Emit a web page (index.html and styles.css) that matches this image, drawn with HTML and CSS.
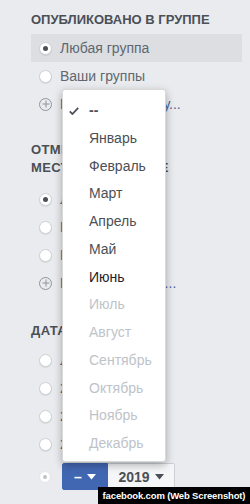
FILE: index.html
```html
<!DOCTYPE html>
<html lang="ru">

<head>
    <meta charset="UTF-8">
    <title>Фильтры</title>
    <link rel="stylesheet" href="styles.css">
</head>

<body>
    <section class="filters">
        <h3>Опубликовано в группе</h3>
        <div class="row aktiv"><span class="radio valgt"></span>Любая группа</div>
        <div class="row"><span class="radio"></span>Ваши группы</div>
        <div class="row"><span class="plus"></span><span class="link">Выберите группу...</span></div>

        <h3 class="second">Отмеченное местоположение</h3>
        <div class="row"><span class="radio valgt"></span>Любое место</div>
        <div class="row"><span class="radio"></span>Рядом</div>
        <div class="row"><span class="radio"></span>Москва</div>
        <div class="row"><span class="plus"></span><span class="link">Выберите город...</span></div>

        <h3 class="third">Дата публикации</h3>
        <div class="row"><span class="radio"></span>Любая дата</div>
        <div class="row"><span class="radio"></span>2019</div>
        <div class="row"><span class="radio"></span>2018</div>
        <div class="row"><span class="radio"></span>2017</div>
        <div class="vaelg">
            <span class="radio lille valgt"></span>
            <button class="knap blaa">–<svg width="9" height="6" viewBox="0 0 9 6"><path d="M0 0h9L4.5 5.5z" fill="#fff"/></svg></button>
            <button class="knap aar">2019<svg width="9" height="6" viewBox="0 0 9 6"><path d="M0 0h9L4.5 5.5z" fill="#4b4f56"/></svg></button>
        </div>
    </section>

    <ul class="menu">
        <li class="tom"><svg class="flueben" width="10" height="8" viewBox="0 0 10 8"><path d="M0.8 4.3l2.6 2.7L9.2 0.8" fill="none" stroke="#4b4f56" stroke-width="1.8"/></svg>--</li>
        <li>Январь</li>
        <li>Февраль</li>
        <li>Март</li>
        <li>Апрель</li>
        <li>Май</li>
        <li class="nu">Июнь</li>
        <li class="off">Июль</li>
        <li class="off">Август</li>
        <li class="off">Сентябрь</li>
        <li class="off">Октябрь</li>
        <li class="off">Ноябрь</li>
        <li class="off">Декабрь</li>
    </ul>

    <div class="kilde">facebook.com (Web Screenshot)</div>
</body>

</html>
```

FILE: styles.css
```css
* {
    margin: 0;
    padding: 0;
    box-sizing: border-box;
}

body {
    background-color: #e9ebee;
    font-family: "Liberation Sans", Arial, sans-serif;
    color: #606770;
    width: 250px;
    height: 504px;
    overflow: hidden;
    position: relative;
}

.filters {
    padding: 11px 8px 0 31px;
}

h3 {
    font-size: 13px;
    line-height: 18px;
    font-weight: bold;
    text-transform: uppercase;
    color: #4b4f56;
    margin-bottom: 5px;
}

h3.second {
    margin-top: 23px;
    margin-bottom: 8px;
    letter-spacing: 0.4px;
}

h3.third {
    margin-top: 25px;
    margin-bottom: 6px;
    letter-spacing: 0.4px;
}

.row {
    display: flex;
    align-items: center;
    height: 28px;
    padding-left: 8px;
    font-size: 14px;
    white-space: nowrap;
}

.aktiv {
    background-color: #dcdee2;
}

.link {
    color: #4b67a1;
}

.radio {
    flex: none;
    display: flex;
    align-items: center;
    justify-content: center;
    width: 13px;
    height: 13px;
    margin-right: 8px;
    border-radius: 50%;
    background-color: #fff;
    border: 1px solid #ccd0d5;
    box-shadow: 0 1px 1px rgba(0, 0, 0, 0.08);
}

.radio.valgt::after {
    content: "";
    width: 5px;
    height: 5px;
    border-radius: 50%;
    background-color: #4b4f56;
}

.plus {
    flex: none;
    position: relative;
    width: 13px;
    height: 13px;
    margin-right: 8px;
    border-radius: 50%;
    border: 1px solid #90949c;
}

.plus::before,
.plus::after {
    content: "";
    position: absolute;
    background-color: #90949c;
    left: 50%;
    top: 50%;
    transform: translate(-50%, -50%);
}

.plus::before {
    width: 7px;
    height: 1px;
}

.plus::after {
    width: 1px;
    height: 7px;
}

.vaelg {
    display: flex;
    align-items: center;
    height: 27px;
    margin-top: 5px;
    padding-left: 8px;
}

.radio.lille {
    width: 12px;
    height: 12px;
    margin-right: 11px;
    border-color: #e4e6e9;
    box-shadow: none;
}

.radio.lille::after {
    width: 4px;
    height: 4px;
    background-color: #bec3c9;
}

.knap {
    display: flex;
    align-items: center;
    justify-content: center;
    height: 27px;
    font-family: "Liberation Sans", Arial, sans-serif;
    font-size: 14px;
    font-weight: bold;
    border: 1px solid #ccd0d5;
}

.knap svg {
    margin-left: 5px;
}

.blaa {
    width: 46px;
    background-color: #4267b2;
    border-color: #4267b2;
    color: #fff;
    border-radius: 2px 0 0 2px;
}

.aar {
    width: 67px;
    background-color: #f5f6f7;
    color: #4b4f56;
    border-left: none;
    border-radius: 0 2px 2px 0;
}

.menu {
    position: absolute;
    left: 62px;
    top: 89px;
    width: 104px;
    height: 373px;
    list-style: none;
    padding-top: 7px;
    background-color: #fff;
    border: 1px solid rgba(0, 0, 0, 0.15);
    border-radius: 3px;
    box-shadow: 0 3px 8px rgba(0, 0, 0, 0.3);
}

.menu li {
    position: relative;
    height: 27.75px;
    line-height: 27.75px;
    padding-left: 26px;
    font-size: 14px;
    color: #4b4f56;
}

.menu .tom {
    font-weight: bold;
}

.flueben {
    position: absolute;
    left: 6px;
    top: 10px;
}

.menu .nu {
    color: #1d2129;
}

.menu .off {
    color: #bec3c9;
}

.kilde {
    position: absolute;
    left: 98px;
    right: 0;
    bottom: 0;
    height: 17px;
    line-height: 17px;
    background-color: #000;
    color: #fff;
    font-size: 9.5px;
    letter-spacing: -0.15px;
    font-weight: bold;
    text-align: center;
    white-space: nowrap;
}
```
